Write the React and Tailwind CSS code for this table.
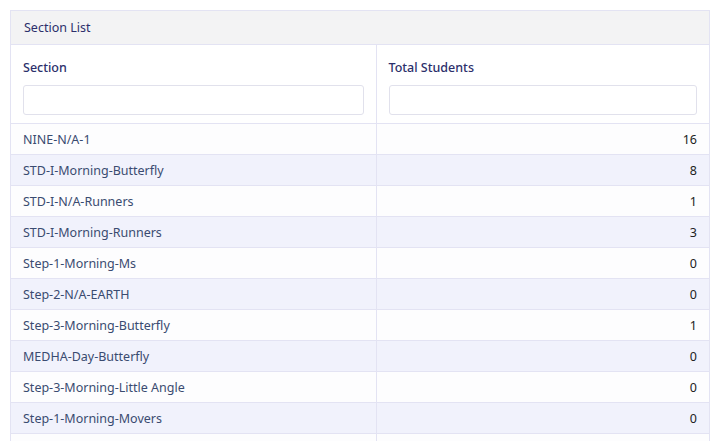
const rows = [
  ['NINE-N/A-1', 16],
  ['STD-I-Morning-Butterfly', 8],
  ['STD-I-N/A-Runners', 1],
  ['STD-I-Morning-Runners', 3],
  ['Step-1-Morning-Ms', 0],
  ['Step-2-N/A-EARTH', 0],
  ['Step-3-Morning-Butterfly', 1],
  ['MEDHA-Day-Butterfly', 0],
  ['Step-3-Morning-Little Angle', 0],
  ['Step-1-Morning-Movers', 0],
]

export default function App() {
  return (
    <div className="h-[441px] overflow-hidden bg-white pt-[10px] pl-[10px] pr-[18px] font-['Noto_Sans',sans-serif]">
      <div className="border border-[#e3e3f3]">
        {/* Card header */}
        <div className="h-[34px] bg-[#f3f3f4] border-b border-[#e3e3f3] px-[13px] pt-[2px] flex items-center text-[12.5px] text-[#2c2f6b]">
          Section List
        </div>

        <table className="w-full border-collapse table-fixed">
          <thead>
            <tr className="border-b border-[#e3e3f3]">
              <th className="w-[365px] border-r border-[#e3e3f3] px-[12px] pt-[14px] pb-[8px] text-left font-medium align-top">
                <div className="text-[12.5px] leading-[18px] text-[#2c2f6b]">Section</div>
                <input className="mt-[8px] block w-full h-[30px] rounded-[3px] border border-[#e1e1ec] bg-white outline-none" />
              </th>
              <th className="px-[12px] pt-[14px] pb-[8px] text-left font-medium align-top">
                <div className="text-[12.5px] leading-[18px] text-[#2c2f6b]">Total Students</div>
                <input className="mt-[8px] block w-full h-[30px] rounded-[3px] border border-[#e1e1ec] bg-white outline-none" />
              </th>
            </tr>
          </thead>
          <tbody>
            {rows.map(([name, total], i) => (
              <tr
                key={name}
                className={`h-[31px] border-b border-[#e3e3f3] ${i % 2 === 1 ? 'bg-[#f1f2fc]' : 'bg-[#fdfdfe]'}`}
              >
                <td className="border-r border-[#e3e3f3] px-[12px] pt-[2px] text-[12.5px] text-[#3a4b70]">{name}</td>
                <td className="px-[12px] pt-[2px] text-right text-[12.5px] text-[#222]">{total}</td>
              </tr>
            ))}
            <tr className="h-[31px] bg-[#fdfdfe]">
              <td className="border-r border-[#e3e3f3]"></td>
              <td></td>
            </tr>
          </tbody>
        </table>
      </div>
    </div>
  )
}
